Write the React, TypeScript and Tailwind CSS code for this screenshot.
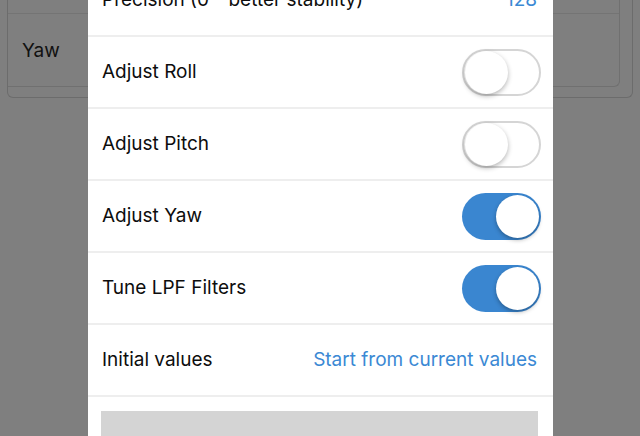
import React from 'react';

function Toggle({ on }: { on: boolean }) {
  if (on) {
    return (
      <div className="relative h-[47px] w-[79px] rounded-full bg-[#3a86d0]">
        <div className="absolute right-[2px] top-[2px] h-[43px] w-[43px] rounded-full bg-white shadow-[0_2px_4px_rgba(0,0,0,0.3)]" />
      </div>
    );
  }
  return (
    <div className="relative h-[47px] w-[79px] rounded-full border-2 border-[#d5d5d5] bg-white">
      <div className="absolute left-[1px] top-[0px] h-[43px] w-[43px] rounded-full bg-white shadow-[0_2px_5px_rgba(0,0,0,0.3)]" />
    </div>
  );
}

function Row({ label, children }: { label: string; children: React.ReactNode }) {
  return (
    <div className="flex h-[72px] items-center justify-between border-b-2 border-[#eeeeee] pl-[14px] pr-[12px]">
      <span className="text-[19px] text-[#0d0d0d]">{label}</span>
      {children}
    </div>
  );
}

export default function App() {
  const toggles = [
    { label: 'Adjust Roll', on: false },
    { label: 'Adjust Pitch', on: false },
    { label: 'Adjust Yaw', on: true },
    { label: 'Tune LPF Filters', on: true },
  ];

  return (
    <div
      className="relative h-[436px] w-[640px] overflow-hidden bg-[#7f7f7f]"
      style={{ fontFamily: 'Inter, "Noto Sans", sans-serif' }}
    >
      {/* page behind the dimmed overlay */}
      <div className="px-[7px]">
        <div className="h-[98px] rounded-b-md border border-t-0 border-[#6c6c6c]">
          <div className="mr-[12px] h-[87px] rounded-br-md border-r border-b border-[#707070]">
            <div className="h-[14px] border-b border-[#747474]" />
            <div className="pl-[14px] pt-[25px] text-[19px] leading-[24px] text-[#111]">Yaw</div>
          </div>
        </div>
      </div>

      {/* modal sheet */}
      <div className="absolute left-[88px] top-[-35px] w-[465px] bg-white">
        <Row label="Precision (0 - better stability)">
          <span className="pr-[4px] text-[19px] text-[#3b89d4]">128</span>
        </Row>
        {toggles.map(t => (
          <Row key={t.label} label={t.label}>
            <Toggle on={t.on} />
          </Row>
        ))}
        <Row label="Initial values">
          <span className="pr-[4px] text-[19px] text-[#3b89d4]">Start from current values</span>
        </Row>
        <div className="ml-[13px] mr-[15px] pt-[14px]">
          <div className="h-[60px] bg-[#d4d4d4]" />
        </div>
      </div>
    </div>
  );
}
